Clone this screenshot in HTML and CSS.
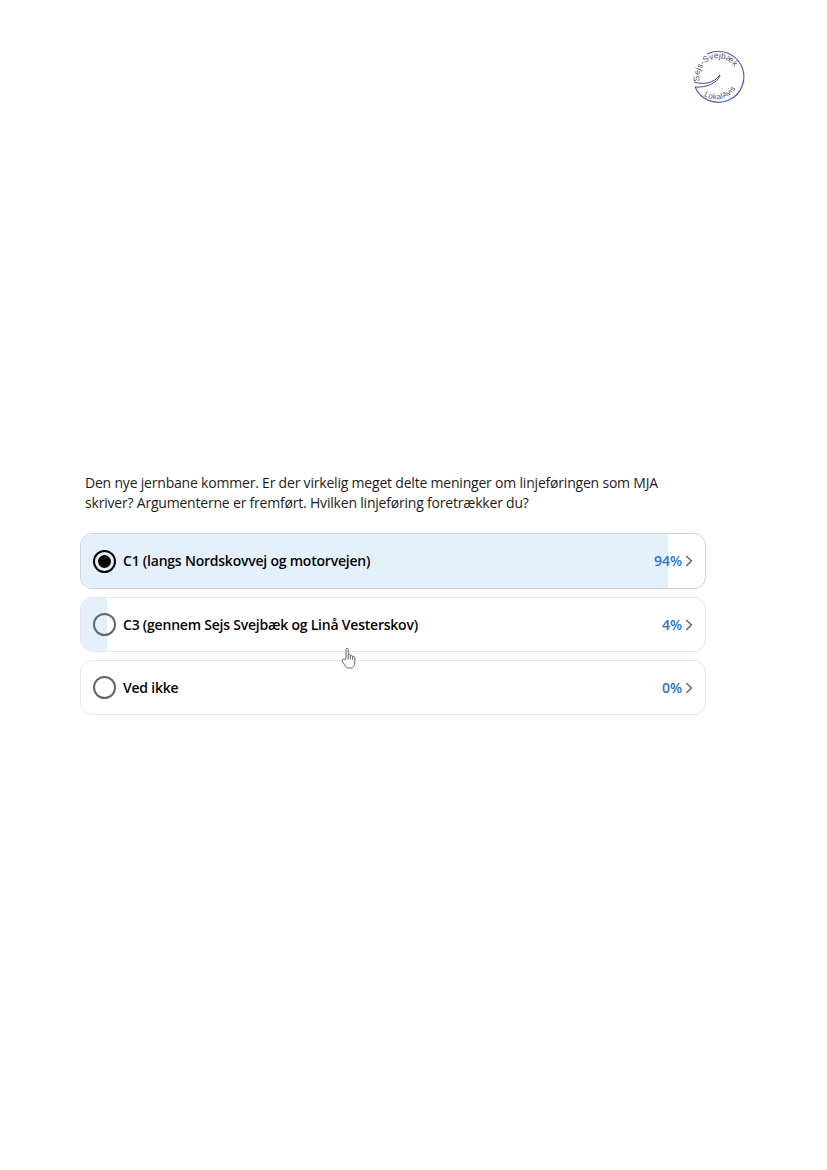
FILE: index.html
```html
<!DOCTYPE html>
<html lang="da">
<head>
<meta charset="utf-8">
<title>Afstemning</title>
<link rel="stylesheet" href="styles.css">
</head>
<body>
<main class="page">
  <header class="header">
    <svg class="logo" width="56" height="56" viewBox="0 0 56 56" aria-label="Sejs-Svejbæk LokalAvis">
      <defs>
        <path id="arcTop" d="M9.7 31 A18.8 18.8 0 1 1 45.5 34"/>
        <path id="arcBottom" d="M14 46 A23 23 0 0 0 46 38"/>
      </defs>
      <path class="logo-ring" d="M5 37 A25.5 25.5 0 1 0 17 4"/>
      <path class="logo-swoosh" d="M4 32 C14 35 24 33 30 25 C28 33 16 38 5 37"/>
      <text class="logo-text"><textPath href="#arcTop">Sejs-Svejbæk</textPath></text>
      <text class="logo-text logo-text-small"><textPath href="#arcBottom">LokalAvis</textPath></text>
    </svg>
  </header>

  <section class="poll">
    <p class="question">Den nye jernbane kommer. Er der virkelig meget delte meninger om linjeføringen som MJA skriver? Argumenterne er fremført. Hvilken linjeføring foretrækker du?</p>

    <div class="options">
      <div class="option option-selected">
        <span class="fill" style="width:94%"></span>
        <span class="radio radio-on"><span class="dot"></span></span>
        <span class="label">C1 (langs Nordskovvej og motorvejen)</span>
        <span class="pct">94%</span>
        <svg class="chev" width="8" height="12" viewBox="0 0 8 12"><path d="M1.2 1 L6.4 6 L1.2 11"/></svg>
      </div>
      <div class="option">
        <span class="fill" style="width:4.2%"></span>
        <span class="radio"></span>
        <span class="label">C3 (gennem Sejs Svejbæk og Linå Vesterskov)</span>
        <span class="pct">4%</span>
        <svg class="chev" width="8" height="12" viewBox="0 0 8 12"><path d="M1.2 1 L6.4 6 L1.2 11"/></svg>
        <svg class="cursor" width="16" height="22" viewBox="0 0 16 22">
          <path d="M5 12 V2.4 C5 .8 7.2 .8 7.2 2.4 V8.5 C7.2 7 9.4 7 9.4 8.7 V9.4 C9.6 8 11.5 8 11.6 9.6 V10.2 C11.9 9 13.8 9.2 13.8 10.8 V15 C13.8 18 12.5 21 10.5 21 H7.5 C5.5 21 4.6 19.6 3.6 18 L1.2 14 C.4 12.6 2 11.4 3.2 12.6 Z"/>
          <path d="M7.2 8.5 V12.5 M9.4 9 V12.5 M11.6 10 V12.5"/>
        </svg>
      </div>
      <div class="option">
        <span class="radio"></span>
        <span class="label">Ved ikke</span>
        <span class="pct">0%</span>
        <svg class="chev" width="8" height="12" viewBox="0 0 8 12"><path d="M1.2 1 L6.4 6 L1.2 11"/></svg>
      </div>
    </div>
  </section>
</main>
</body>
</html>
```

FILE: styles.css
```css
html, body {
  margin: 0;
  padding: 0;
  background: #fff;
}

.page {
  width: 827px;
  height: 1170px;
  overflow: hidden;
  font-family: "Open Sans", "Noto Sans", "Liberation Sans", sans-serif;
  color: #050505;
}

.header {
  display: flex;
  justify-content: flex-end;
  padding: 50px 81px 0 0;
  height: 56px;
}

.logo {
  overflow: visible;
}

.logo-ring {
  fill: none;
  stroke: #5a52b8;
  stroke-width: 1.2;
}

.logo-swoosh {
  fill: #fff;
  stroke: #4a44ad;
  stroke-width: 1;
}

.logo-text {
  font-family: "Liberation Sans", sans-serif;
  font-size: 8.5px;
  fill: #55555f;
}

.logo-text-small {
  font-size: 8px;
  letter-spacing: 0.2px;
}

.poll {
  margin: 367px 0 0 80px;
  width: 626px;
}

.question {
  margin: 0 0 20px;
  padding: 0 36px 0 5px;
  font-size: 14px;
  line-height: 20px;
  letter-spacing: -0.2px;
  color: #1c1c1c;
}

.options {
  display: flex;
  flex-direction: column;
  gap: 8px;
}

.option {
  position: relative;
  display: flex;
  align-items: center;
  box-sizing: border-box;
  height: 55px;
  padding: 0 12px;
  border: 1px solid #e4e6e9;
  border-radius: 12px;
  background: #fff;
}

.option-selected {
  height: 56px;
  border-color: #ced0d4;
}

.fill {
  position: absolute;
  left: 0;
  top: 0;
  bottom: 0;
  background: #e4f1fd;
  border-radius: 11px 0 0 11px;
}

.radio {
  position: relative;
  display: flex;
  align-items: center;
  justify-content: center;
  box-sizing: border-box;
  width: 23px;
  height: 23px;
  flex: none;
  border: 2px solid #65676b;
  border-radius: 50%;
}

.radio-on {
  border-color: #050505;
}

.dot {
  width: 13px;
  height: 13px;
  border-radius: 50%;
  background: #050505;
}

.label {
  position: relative;
  margin-left: 7px;
  flex: 1;
  font-size: 14px;
  font-weight: 600;
  line-height: 20px;
  letter-spacing: -0.22px;
}

.pct {
  position: relative;
  font-size: 14px;
  font-weight: 600;
  line-height: 20px;
  color: #2f6fd6;
}

.chev {
  position: relative;
  flex: none;
  margin-left: 3px;
  fill: none;
  stroke: #65676b;
  stroke-width: 1.5;
}

.cursor {
  position: absolute;
  z-index: 1;
  left: 260px;
  top: 49px;
  fill: #fff;
  stroke: #55555f;
  stroke-width: 0.9;
}
```
